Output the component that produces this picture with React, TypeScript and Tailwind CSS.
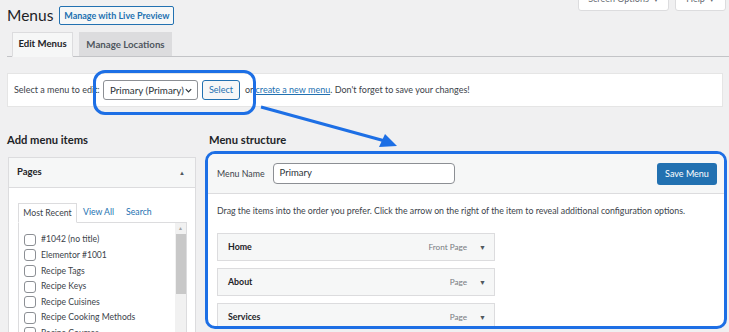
import React from "react";

const Check = ({ label }: { label: string }) => (
  <div className="flex items-center h-[16px]">
    <span className="w-[12px] h-[12px] border border-[#8c8f94] rounded-[3px] bg-white shrink-0" />
    <span className="ml-[5px] text-[8.6px] text-[#3c434a] whitespace-nowrap">{label}</span>
  </div>
);

const Item = ({ name, type }: { name: string; type: string }) => (
  <div className="flex items-center h-[28px] w-[278px] bg-[#f6f7f7] border border-[#dcdcde] pl-[10px] pr-[8px] shrink-0">
    <span className="text-[8.8px] font-bold text-[#1d2327]">{name}</span>
    <span className="ml-auto text-[8.2px] text-[#787c82]">{type}</span>
    <span className="ml-[12px] text-[7px] text-[#50575e]">▼</span>
  </div>
);

export default function App() {
  return (
    <div
      className="relative w-[729px] h-[332px] overflow-hidden bg-[#f0f0f1] text-[#3c434a]"
      style={{ fontFamily: 'Lato, "Noto Sans", sans-serif' }}
    >
      {/* Header row */}
      <div className="flex items-start justify-between pl-[7px] pr-[3px]">
        <div className="flex items-center mt-[3px]">
          <h1 className="text-[15.5px] leading-[24px] text-[#1d2327] font-normal">Menus</h1>
          <button className="ml-[6px] h-[19px] w-[115px] border border-[#2271b1] rounded-[2px] bg-[#f6f7f7] text-[9px] font-bold text-[#2271b1] leading-none whitespace-nowrap">
            Manage with Live Preview
          </button>
        </div>
        <div className="flex gap-[6px] -mt-[13px]">
          <div className="h-[24px] w-[91px] bg-white border border-[#dcdcde] rounded-b-[3px] flex items-center justify-center text-[9px] text-[#646970]">
            Screen Options <span className="ml-[4px] text-[6px]">▼</span>
          </div>
          <div className="h-[24px] w-[51px] bg-white border border-[#dcdcde] rounded-b-[3px] flex items-center justify-center text-[9px] text-[#646970]">
            Help <span className="ml-[4px] text-[6px]">▼</span>
          </div>
        </div>
      </div>

      {/* Tabs */}
      <div className="ml-[7px] mt-[6px] flex items-end h-[24px] border-b border-[#c3c4c7] pl-[5px] gap-[6px]">
        <div className="h-[25px] w-[61px] -mb-px flex items-center justify-center bg-[#f6f7f7] border border-[#dcdcde] border-b-[#f6f7f7] text-[9.6px] font-bold text-[#1d2327] whitespace-nowrap">
          Edit Menus
        </div>
        <div className="h-[24px] w-[93px] flex items-center justify-center bg-[#dcdcde] border border-[#dcdcde] text-[9.7px] font-bold text-[#50575e] whitespace-nowrap">
          Manage Locations
        </div>
      </div>

      {/* Select bar */}
      <div className="relative ml-[7px] mr-[6px] mt-[16px] h-[34px] bg-white border border-[#e5e5e5] flex items-center pl-[6px] text-[9px] whitespace-nowrap">
        <span className="w-[89px]">Select a menu to edit:</span>
        <div className="h-[20px] w-[95px] border border-[#8c8f94] rounded-[3px] flex items-center pl-[6px] pr-[4px] text-[9.8px] text-[#2c3338] bg-white">
          <span className="whitespace-nowrap">Primary (Primary)</span>
          <svg className="ml-auto" width="9" height="9" viewBox="0 0 10 10">
            <path d="M2 3.5 L5 6.5 L8 3.5" fill="none" stroke="#2c3338" strokeWidth="1.3" />
          </svg>
        </div>
        <button className="ml-[4px] h-[20px] w-[38px] border border-[#2271b1] rounded-[3px] bg-[#f6f7f7] text-[9px] text-[#2271b1]">
          Select
        </button>
        <span className="ml-[5px] whitespace-nowrap">
          or <a className="text-[#2271b1] underline">create a new menu</a>. Don&apos;t forget to save your changes!
        </span>
        <div className="absolute left-[85px] top-[-4px] w-[163px] h-[45px] border-[3px] border-[#1d6fe5] rounded-[12px] pointer-events-none" />
      </div>

      {/* Columns */}
      <div className="flex mt-[24px]">
        {/* Left */}
        <div className="ml-[7px] w-[189px]">
          <h2 className="text-[11.2px] leading-[18px] font-bold text-[#1d2327]">Add menu items</h2>
          <div className="mt-[8px] ml-[1px] border border-[#dcdcde] bg-white">
            <div className="h-[30px] flex items-center bg-[#f6f7f7] border-b border-[#dcdcde] pl-[8px] pr-[10px]">
              <span className="text-[9.5px] font-bold text-[#1d2327]">Pages</span>
              <span className="ml-auto text-[6px] text-[#50575e]">▲</span>
            </div>
            <div className="pt-[14px] pl-[9px] pr-[8px]">
              <div className="flex items-end h-[20px] text-[8.7px] whitespace-nowrap">
                <div className="h-[20px] w-[59px] flex items-center justify-center border border-[#dcdcde] border-b-white -mb-px bg-white text-[#3c434a] relative z-10">
                  Most Recent
                </div>
                <span className="ml-[6px] mb-[4px] text-[#2271b1]">View All</span>
                <span className="ml-[12px] mb-[4px] text-[#2271b1]">Search</span>
              </div>
              <div className="flex border border-[#dcdcde] h-[120px]">
                <div className="flex-1 pl-[5px] pt-[9px] flex flex-col">
                  <Check label="#1042 (no title)" />
                  <Check label="Elementor #1001" />
                  <Check label="Recipe Tags" />
                  <Check label="Recipe Keys" />
                  <Check label="Recipe Cuisines" />
                  <Check label="Recipe Cooking Methods" />
                  <Check label="Recipe Courses" />
                </div>
                <div className="w-[11px] bg-[#f1f1f1] flex flex-col items-center">
                  <span className="mt-[2px] text-[5px] text-[#a3a3a3] leading-[6px]">▲</span>
                  <div className="mt-[3px] w-[10px] h-[60px] bg-[#c8c8c8]" />
                </div>
              </div>
            </div>
          </div>
        </div>

        {/* Right */}
        <div className="ml-[9px] w-[522px]">
          <h2 className="pl-[4px] text-[11.2px] leading-[18px] font-bold text-[#1d2327]">Menu structure</h2>
          <div className="mt-[2px] h-[178px] border-[3px] border-[#1d6fe5] rounded-[10px] overflow-hidden bg-white">
            <div className="h-[40px] flex items-center bg-[#f6f7f7] border-b border-[#dcdcde] pl-[9px] pr-[7px]">
              <span className="text-[8.8px] text-[#3c434a]">Menu Name</span>
              <div className="ml-[8px] h-[21px] w-[182px] border border-[#8c8f94] rounded-[4px] bg-white flex items-center pl-[6px] text-[9.5px] text-[#2c3338]">
                Primary
              </div>
              <button className="ml-auto h-[22px] w-[60px] rounded-[3px] bg-[#2271b1] text-white text-[9px]">
                Save Menu
              </button>
            </div>
            <div className="pl-[9px] pt-[10px]">
              <p className="text-[8.75px] leading-[14px] text-[#3c434a] whitespace-nowrap">
                Drag the items into the order you prefer. Click the arrow on the right of the item to reveal additional configuration options.
              </p>
              <div className="mt-[15px] flex flex-col gap-[7px]">
                <Item name="Home" type="Front Page" />
                <Item name="About" type="Page" />
                <Item name="Services" type="Page" />
              </div>
            </div>
          </div>
        </div>
      </div>

      {/* Annotation arrow */}
      <svg className="absolute left-0 top-0 pointer-events-none" width="729" height="332">
        <line x1="261" y1="107" x2="385" y2="141" stroke="#1d6fe5" strokeWidth="3" />
        <polygon points="397,146 379,147 385,134" fill="#1d6fe5" />
      </svg>
    </div>
  );
}
